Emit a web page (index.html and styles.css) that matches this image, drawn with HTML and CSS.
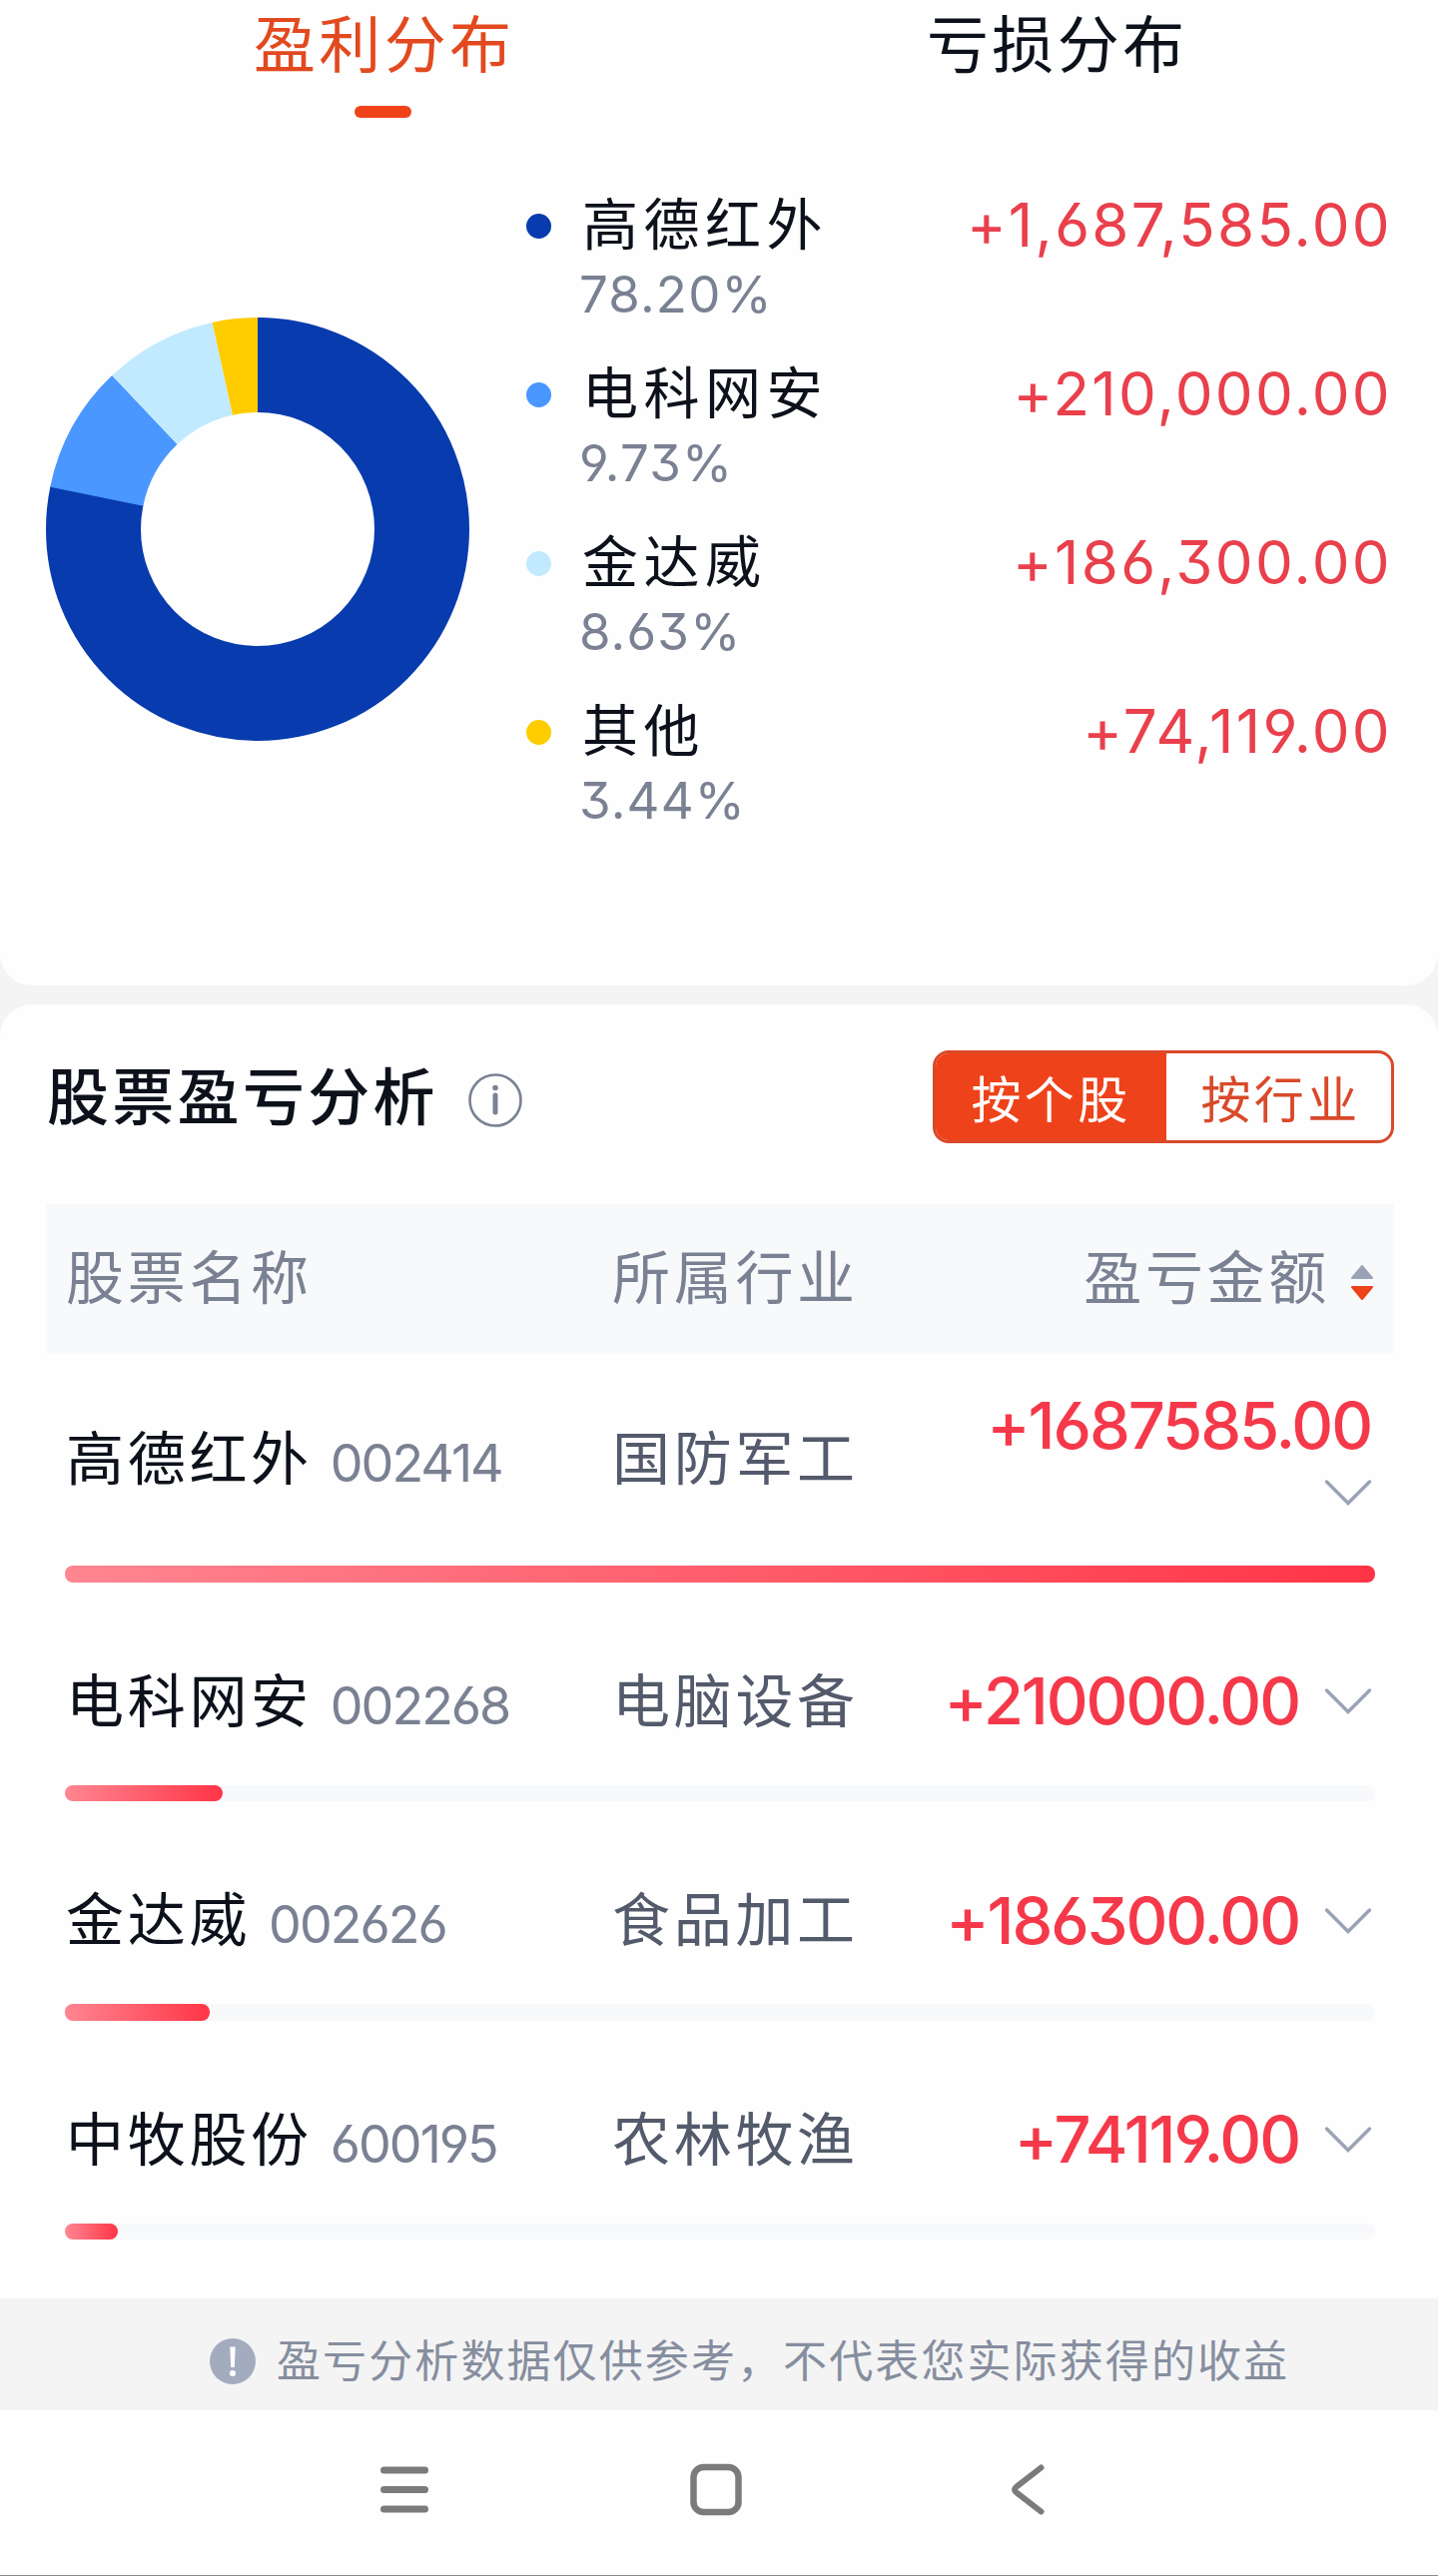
FILE: index.html
```html
<!DOCTYPE html>
<html lang="zh-CN">
<head>
<meta charset="UTF-8">
<meta name="viewport" content="width=device-width, initial-scale=1.0">
<title>盈亏分析</title>
<link rel="stylesheet" href="styles.css">
</head>
<body>
  <section class="card distribution">
    <div class="tabs">
      <div class="tab active">盈利分布</div>
      <div class="tab">亏损分布</div>
    </div>

    <div class="chart-area">
      <svg class="donut" viewBox="0 0 424 424">
        <g fill="none" stroke-width="95" transform="rotate(-90 212 212)">
          <circle cx="212" cy="212" r="164.5" stroke="#083bad" pathLength="100" stroke-dasharray="78.3 100"/>
          <circle cx="212" cy="212" r="164.5" stroke="#4a97ff" pathLength="100" stroke-dasharray="9.73 100" stroke-dashoffset="-78.2"/>
          <circle cx="212" cy="212" r="164.5" stroke="#c2eaff" pathLength="100" stroke-dasharray="8.63 100" stroke-dashoffset="-87.93"/>
          <circle cx="212" cy="212" r="164.5" stroke="#ffcc00" pathLength="100" stroke-dasharray="3.44 100" stroke-dashoffset="-96.56"/>
        </g>
      </svg>

      <ul class="legend">
        <li>
          <i class="dot blue"></i>
          <span class="legend-name">高德红外</span>
          <span class="legend-amount">+1,687,585.00</span>
          <span class="legend-percent">78.20%</span>
        </li>
        <li>
          <i class="dot sky"></i>
          <span class="legend-name">电科网安</span>
          <span class="legend-amount">+210,000.00</span>
          <span class="legend-percent">9.73%</span>
        </li>
        <li>
          <i class="dot pale"></i>
          <span class="legend-name">金达威</span>
          <span class="legend-amount">+186,300.00</span>
          <span class="legend-percent">8.63%</span>
        </li>
        <li>
          <i class="dot yellow"></i>
          <span class="legend-name">其他</span>
          <span class="legend-amount">+74,119.00</span>
          <span class="legend-percent">3.44%</span>
        </li>
      </ul>
    </div>
  </section>

  <section class="card analysis">
    <div class="analysis-head">
      <h2>股票盈亏分析</h2>
      <svg class="info" viewBox="0 0 54 54">
        <circle cx="27" cy="27" r="25.5" fill="none" stroke="#7a8193" stroke-width="2.6"/>
        <circle cx="27" cy="14.5" r="2.8" fill="#7a8193"/>
        <path d="M27 22v17" stroke="#7a8193" stroke-width="5" stroke-linecap="round"/>
      </svg>
      <div class="switch">
        <span class="on">按个股</span>
        <span>按行业</span>
      </div>
    </div>

    <div class="table-head">
      <span>股票名称</span>
      <span>所属行业</span>
      <span class="sortable">盈亏金额
        <svg class="sort" viewBox="0 0 24 36">
          <path d="M12 2l10 12H2z" fill="#9aa3b5" stroke="#9aa3b5" stroke-width="2" stroke-linejoin="round"/>
          <path d="M12 35L2 23h20z" fill="#ee421a" stroke="#ee421a" stroke-width="2" stroke-linejoin="round"/>
        </svg>
      </span>
    </div>

    <div class="stock tall">
      <div class="stock-row">
        <div class="stock-name">高德红外<span class="code">002414</span></div>
        <div class="industry">国防军工</div>
        <div class="amount">
          <span>+1687585.00</span>
          <svg class="chevron" viewBox="0 0 46 26"><path d="M1.5 2L23 23.5 44.5 2"/></svg>
        </div>
      </div>
      <div class="bar"><div class="bar-fill" style="width: 100%"></div></div>
    </div>

    <div class="stock">
      <div class="stock-row">
        <div class="stock-name">电科网安<span class="code">002268</span></div>
        <div class="industry">电脑设备</div>
        <div class="amount">
          <span>+210000.00</span>
          <svg class="chevron" viewBox="0 0 46 26"><path d="M1.5 2L23 23.5 44.5 2"/></svg>
        </div>
      </div>
      <div class="bar"><div class="bar-fill" style="width: 12.04%"></div></div>
    </div>

    <div class="stock">
      <div class="stock-row">
        <div class="stock-name">金达威<span class="code">002626</span></div>
        <div class="industry">食品加工</div>
        <div class="amount">
          <span>+186300.00</span>
          <svg class="chevron" viewBox="0 0 46 26"><path d="M1.5 2L23 23.5 44.5 2"/></svg>
        </div>
      </div>
      <div class="bar"><div class="bar-fill" style="width: 11.04%"></div></div>
    </div>

    <div class="stock">
      <div class="stock-row">
        <div class="stock-name">中牧股份<span class="code">600195</span></div>
        <div class="industry">农林牧渔</div>
        <div class="amount">
          <span>+74119.00</span>
          <svg class="chevron" viewBox="0 0 46 26"><path d="M1.5 2L23 23.5 44.5 2"/></svg>
        </div>
      </div>
      <div class="bar"><div class="bar-fill" style="width: 4.04%"></div></div>
    </div>
  </section>

  <footer class="notice">
    <svg class="notice-icon" viewBox="0 0 46 46">
      <circle cx="23" cy="23" r="23" fill="#a3acbf"/>
      <path d="M20.3 8.5h5.4L24.8 29h-3.6z" fill="#fff"/>
      <circle cx="23" cy="35" r="3" fill="#fff"/>
    </svg>
    <span>盈亏分析数据仅供参考，不代表您实际获得的收益</span>
  </footer>

  <nav class="system-nav">
    <svg viewBox="0 0 60 60"><path d="M9.5 11h41M9.5 30.500h41M9.5 50h41" stroke-width="7"/></svg>
    <svg viewBox="0 0 60 60"><rect x="6.500" y="8" width="45" height="45" rx="10" stroke-width="6.5"/></svg>
    <svg viewBox="0 0 60 60"><path d="M41.5 8.500L16.500 28Q13.500 30.500 16.500 33L41.500 52.500" stroke-width="6"/></svg>
  </nav>
</body>
</html>
```

FILE: styles.css
```css
* {
  box-sizing: border-box;
}
body {
  margin: 0;
  width: 1440px;
  height: 2580px;
  overflow: hidden;
  background: #f4f4f4;
  color: #0c111b;
  font-family: "Noto Sans CJK SC", sans-serif;
}
.card {
  background: #fefefe;
}

/* Profit distribution */
.distribution {
  height: 987px;
  border-radius: 0 0 32px 32px;
}
.tabs {
  display: flex;
  height: 119px;
  padding: 1px 46px 0;
}
.tab {
  flex: 1;
  display: flex;
  flex-direction: column;
  align-items: center;
  font-size: 62px;
  line-height: 80px;
  letter-spacing: 3.3px;
  text-indent: 3.3px;
}
.tab.active {
  color: #e2491f;
}
.tab.active::after {
  content: "";
  width: 57px;
  height: 12px;
  margin-top: 25px;
  border-radius: 6px;
  background: #ef4219;
}
.chart-area {
  display: flex;
  padding: 71px 46px 0;
}
.donut {
  width: 424px;
  height: 424px;
  margin: 128px 57px 0 0;
}
.legend {
  flex: 1;
  list-style: none;
  margin: 0;
  padding: 0;
}
.legend li {
  display: grid;
  grid-template-columns: 25px 1fr auto;
  grid-template-rows: 72px 64px;
  column-gap: 31px;
  align-items: center;
  margin-bottom: 33px;
}
.dot {
  width: 25px;
  height: 25px;
  border-radius: 50%;
}
.blue { background: #083bad; }
.sky { background: #4a97ff; }
.pale { background: #c2eaff; }
.yellow { background: #ffcc00; }
.legend-name {
  padding-bottom: 11px;
  font-size: 56px;
  line-height: 61px;
  letter-spacing: 5.5px;
}
.legend-amount,
.legend-percent,
.code,
.amount {
  font-family: Inter, sans-serif;
  font-feature-settings: "cv03", "cv04", "cv09"; /* open 6 and 9, flat-top 3 */
}
.legend-amount {
  padding-bottom: 2px;
  font-size: 60px;
  line-height: 70px;
  letter-spacing: 2.3px;
  color: #e9404c;
}
.legend-percent {
  grid-column: 2;
  margin-left: -3px;
  padding-top: 1px;
  font-size: 51px;
  line-height: 64px;
  letter-spacing: 1.2px;
  color: #7a8193;
}

/* Stock analysis */
.analysis {
  height: 1296px;
  margin-top: 19px;
  padding: 46px 44px 0 46px;
  border-radius: 32px 32px 0 0;
}
.analysis-head {
  display: flex;
  align-items: center;
  height: 93px;
}
.analysis-head h2 {
  margin: 0 0 7px 1px;
  font-size: 62px;
  font-weight: 500;
  line-height: 80px;
  letter-spacing: 3.3px;
}
.info {
  width: 54px;
  height: 54px;
  margin-left: 30px;
  margin-top: 6px;
}
.switch {
  display: flex;
  width: 462px;
  height: 93px;
  margin-left: auto;
  border: 3px solid #d9492a;
  border-radius: 16px;
  overflow: hidden;
  color: #d9492a;
  font-size: 50px;
  line-height: 86px;
  letter-spacing: 3.3px;
  text-align: center;
}
.switch span {
  flex: 1;
  text-indent: 4px;
}
.switch .on {
  flex: 0 0 231px;
  background: #ee421a;
  color: #fff;
  text-indent: 0;
}
.table-head,
.stock-row {
  display: grid;
  grid-template-columns: 547px 1fr auto;
}
.table-head {
  height: 150px;
  margin-top: 61px;
  padding: 0 20px;
  background: #f8f9fb;
  color: #7a8193;
  font-size: 58px;
  line-height: 140px;
  letter-spacing: 3.7px;
}
.sortable {
  display: flex;
  align-items: center;
  height: 140px;
}
.sort {
  width: 24px;
  height: 36px;
  margin: 16px 0 0 20px;
}
.stock {
  padding: 0 19px;
}
.stock-row {
  height: 203px;
  padding-left: 1px;
  padding-top: 71px;
  font-size: 58px;
  line-height: 88px;
  letter-spacing: 3.7px;
}
.tall .stock-row {
  height: 212px;
  padding-top: 0;
}
.tall .stock-name,
.tall .industry {
  padding-top: 57px;
}
.code {
  position: relative;
  top: 2px;
  margin-left: 18px;
  font-size: 52px;
  letter-spacing: -2px;
  color: #7a8193;
}
.industry {
  color: #535a6b;
}
.amount {
  display: flex;
  align-items: center;
  height: 97px;
  padding-right: 4px;
  color: #f5394a;
  font-size: 65px;
  font-weight: 500;
  letter-spacing: -2.1px;
}
.tall .amount {
  flex-direction: column;
  align-items: flex-end;
  height: auto;
  padding-top: 28px;
}
.chevron {
  width: 46px;
  height: 26px;
  margin-left: 26px;
  fill: none;
  stroke: #9aa3b5;
  stroke-width: 3.5;
  stroke-linecap: round;
}
.tall .chevron {
  margin-top: 10px;
}
.bar {
  height: 16.5px;
  border-radius: 8px;
  background: #f8f9fb;
}
.bar-fill {
  height: 100%;
  border-radius: 8px;
  background: linear-gradient(90deg, #ff8691, #ff3547);
}

/* Footer */
.notice {
  display: flex;
  align-items: center;
  height: 112px;
  padding: 8px 0 0 210px;
  color: #868e9f;
  font-size: 44px;
  letter-spacing: 2.1px;
}
.notice span {
  line-height: 70px;
}
.notice-icon {
  width: 46px;
  height: 46px;
  margin-top: 6px;
  margin-right: 21px;
}
.system-nav {
  display: flex;
  gap: 253px;
  height: 166px;
  padding: 49px 0 0 375px;
  background: #fefefe;
  border-bottom: 1px solid #8a8888;
}
.system-nav svg {
  width: 60px;
  height: 60px;
  fill: none;
  stroke: #7b7b7b;
  stroke-linecap: round;
}
```
